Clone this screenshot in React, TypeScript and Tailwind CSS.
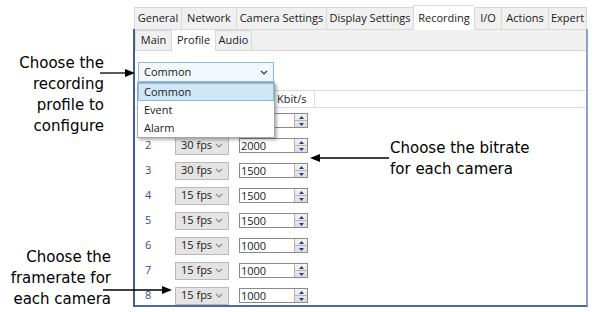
import React from "react";

const UI = { fontFamily: '"Open Sans", "Noto Sans", sans-serif' };
const NOTE = { fontFamily: '"DejaVu Sans", Verdana, sans-serif' };

const topTabs: [string, number][] = [
  ["General", 47],
  ["Network", 55],
  ["Camera Settings", 90],
  ["Display Settings", 87],
  ["Recording", 61],
  ["I/O", 27],
  ["Actions", 47],
  ["Expert", 39],
];

const subTabs: [string, number][] = [
  ["Main", 36],
  ["Profile", 44],
  ["Audio", 37],
];

const rows: [number, string, string][] = [
  [1, "", ""],
  [2, "30 fps", "2000"],
  [3, "30 fps", "1500"],
  [4, "15 fps", "1500"],
  [5, "15 fps", "1500"],
  [6, "15 fps", "1000"],
  [7, "15 fps", "1000"],
  [8, "15 fps", "1000"],
];

function Chevron({ color = "#6b6b6b" }: { color?: string }) {
  return (
    <svg width="8" height="5" viewBox="0 0 8 5">
      <path d="M1 1 L4 4 L7 1" fill="none" stroke={color} strokeWidth="1.2" />
    </svg>
  );
}

function Spinner() {
  return (
    <div className="flex h-full w-[13px] flex-col border-l border-[#b5b5b5] bg-gradient-to-b from-[#f4f4f4] to-[#dcdcdc]">
      <div className="flex flex-1 items-center justify-center border-b border-[#b5b5b5]">
        <svg width="5" height="3" viewBox="0 0 5 3">
          <path d="M0 3 L2.5 0 L5 3 Z" fill="#21428a" />
        </svg>
      </div>
      <div className="flex flex-1 items-center justify-center">
        <svg width="5" height="3" viewBox="0 0 5 3">
          <path d="M0 0 L2.5 3 L5 0 Z" fill="#21428a" />
        </svg>
      </div>
    </div>
  );
}

function Arrow({ x1, x2, y }: { x1: number; x2: number; y: number }) {
  const dir = x2 > x1 ? 1 : -1;
  return (
    <svg className="pointer-events-none absolute left-0 top-0" width="598" height="312">
      <line x1={x1} y1={y} x2={x2 - dir * 8} y2={y} stroke="#000" strokeWidth="1.3" />
      <path d={`M${x2} ${y} L${x2 - dir * 10} ${y - 4} L${x2 - dir * 10} ${y + 4} Z`} fill="#000" />
    </svg>
  );
}

export default function App() {
  return (
    <div className="relative h-[312px] w-[598px] overflow-hidden bg-white" style={UI}>
      <div className="ml-[133px] w-[455px] pt-[5px]">
        {/* top tabs */}
        <div className="flex h-[24px] items-end pl-px">
          {topTabs.map(([t, w], i) => {
            const active = t === "Recording";
            return (
              <div
                key={t}
                style={{ width: w }}
                className={
                  "flex items-center justify-center border-l border-t border-[#d9d9d9] text-[11px] text-[#1a1a1a] " +
                  (i === topTabs.length - 1 ? "border-r " : "") +
                  (active ? "relative z-10 -mb-px h-[25px] bg-white" : "h-[22px] bg-[#f0f0f0]")
                }
              >
                {t}
              </div>
            );
          })}
        </div>
        {/* frame */}
        <div className="flex h-[278px] flex-col overflow-hidden border-b-2 border-l-2 border-r-2 border-b-[#4d6a9a] border-l-[#3e5f93] border-r-[#8ea3c4]">
          <div className="flex h-[22px] shrink-0 items-end border-b border-t border-[#d9d9d9] bg-[#f0f0f0]">
            {subTabs.map(([t, w], i) => {
              const active = t === "Profile";
              return (
                <div
                  key={t}
                  style={{ width: w }}
                  className={
                    "flex items-center justify-center border-l border-t border-[#d9d9d9] text-[11px] text-[#1a1a1a] " +
                    (i === subTabs.length - 1 ? "border-r " : "") +
                    (active ? "relative z-10 -mb-px h-[22px] bg-white" : "h-[20px] bg-[#f0f0f0]")
                  }
                >
                  {t}
                </div>
              );
            })}
          </div>
          {/* content */}
          <div className="flex flex-col bg-white">
            <div className="ml-[3px] mt-[11px] flex h-[20px] w-[136px] items-center justify-between border border-[#86b9e6] bg-[#f2f8fd] pl-[5px] pr-[5px] text-[11px] text-[#1a1a1a]">
              <span>Common</span>
              <Chevron color="#333" />
            </div>
            <div className="mt-[8px] flex h-[18px] items-center border-b border-t border-[#dcdcdc] text-[11px] text-[#1a1a1a]">
              <div className="h-full w-[101px]" />
              <div className="flex h-full w-[79px] items-center border-r border-[#dcdcdc] pl-[41px]">Kbit/s</div>
            </div>
            {rows.map(([n, fps, kb]) => (
              <div key={n} className="flex h-[25px] shrink-0 items-center text-[11px]">
                <div className="w-[40px] pl-[10px] text-[#2f4f8f]">{fps ? n : ""}</div>
                <div className="flex h-[18px] w-[54px] items-center justify-between border border-[#b9b9b9] bg-[#e4e4e4] pl-[5px] pr-[5px] text-[#1a1a1a]">
                  <span>{fps}</span>
                  <Chevron color="#8a8a8a" />
                </div>
                <div className="ml-[10px] flex h-[15px] w-[69px] items-center border border-[#8a8a8a] bg-white">
                  <span className="flex-1 pl-[1px] leading-none text-[#1a1a1a]">{kb}</span>
                  <Spinner />
                </div>
              </div>
            ))}
          </div>
        </div>
      </div>

      {/* dropdown list */}
      <div className="absolute left-[137px] top-[82px] flex h-[56px] w-[138px] flex-col border border-[#a6a6a6] bg-white text-[11px] text-[#1a1a1a] shadow-[2px_2px_3px_rgba(0,0,0,0.3)]">
        <div className="flex h-[18px] items-center border border-[#88bde3] bg-[#cfe7f7] pl-[5px]">Common</div>
        <div className="flex h-[18px] items-center pl-[6px]">Event</div>
        <div className="flex h-[18px] items-center pl-[6px]">Alarm</div>
      </div>

      {/* annotations */}
      <div className="absolute left-0 top-[53px] w-[104px] text-right text-[15px] leading-[21px] text-black" style={NOTE}>
        <div>Choose the</div>
        <div>recording</div>
        <div>profile to</div>
        <div>configure</div>
      </div>
      <div className="absolute left-[390px] top-[138px] text-[15px] leading-[21px] text-black" style={NOTE}>
        <div>Choose the bitrate</div>
        <div>for each camera</div>
      </div>
      <div className="absolute left-0 top-[247px] w-[111px] text-right text-[15px] leading-[21px] text-black" style={NOTE}>
        <div>Choose the</div>
        <div>framerate for</div>
        <div>each camera</div>
      </div>
      <Arrow x1={100} x2={135} y={73} />
      <Arrow x1={389} x2={310} y={158} />
      <Arrow x1={103} x2={172} y={290} />
    </div>
  );
}
